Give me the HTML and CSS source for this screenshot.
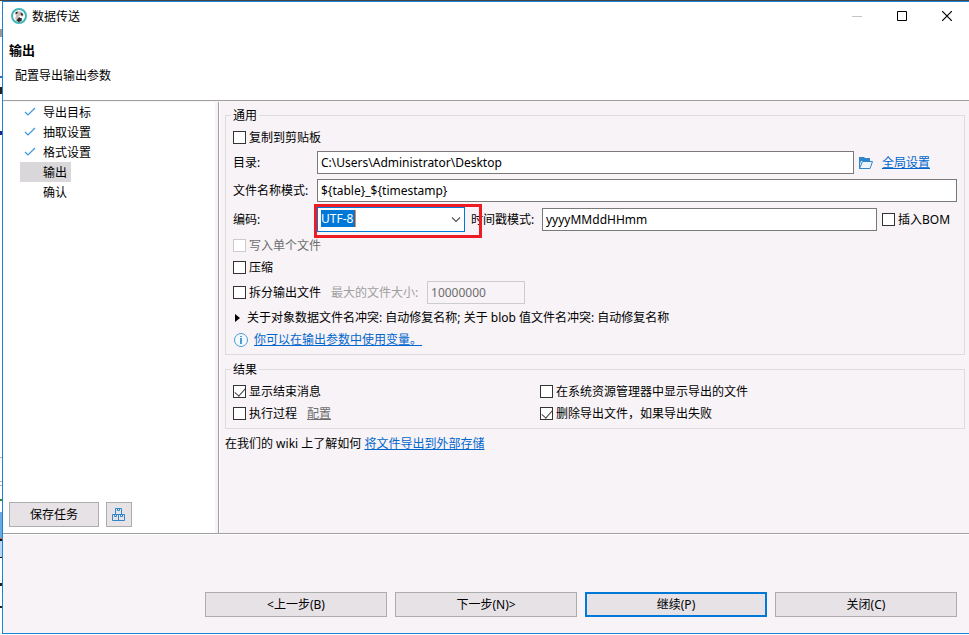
FILE: index.html
```html
<!DOCTYPE html>
<html lang="zh-CN">
<head>
  <meta charset="UTF-8">
  <meta name="viewport" content="width=device-width, initial-scale=1.0">
  <title>数据传送</title>
  <link rel="stylesheet" href="styles.css">
</head>
<body>
  <div class="fondo"></div>
  <div class="dialog">
    <!-- title bar -->
    <div class="titlebar">
      <svg class="logo" width="16" height="16" viewBox="0 0 16 16">
        <circle cx="8" cy="8" r="7" fill="#fff" stroke="#42b5b8" stroke-width="2"/>
        <path d="M4 5.500C5 3.500 7 3 9 3.500c2 0 3.500 1.500 3.500 4L11 9l-1-1.500L8 8 7 10l1.500 3.500L5.500 13C4 11 4 9.500 5 8z" fill="#c9bfb8"/>
        <path d="M4 5l2-1.500 1 1L5.500 6zM9.500 4.500L12 6l-.5 2L10 7zM7 10.500L8 9l1.500 1 1.500.5-.5 2.500-3 1-2-1.500z" fill="#2d2725"/>
      </svg>
      <span class="titulo">数据传送</span>
      <div class="win-buttons">
        <button class="win" aria-label="最小化" disabled><svg width="10" height="10"><path d="M0 5.500h10" stroke="#c4c4c4"/></svg></button>
        <button class="win" aria-label="最大化"><svg width="10" height="10"><path d="M.5 .5h9v9h-9z" fill="none" stroke="#000"/></svg></button>
        <button class="win" aria-label="关闭窗口"><svg width="10" height="10"><path d="M0 0l10 10M10 0L0 10" stroke="#000" stroke-width="1.200"/></svg></button>
      </div>
    </div>

    <!-- header -->
    <div class="header">
      <h1>输出</h1>
      <p>配置导出输出参数</p>
    </div>

    <div class="middle">
      <!-- steps -->
      <div class="sidebar">
        <ul class="steps">
          <li><svg class="tick" width="12" height="10"><path d="M1 5l3 3 7-7"/></svg>导出目标</li>
          <li><svg class="tick" width="12" height="10"><path d="M1 5l3 3 7-7"/></svg>抽取设置</li>
          <li><svg class="tick" width="12" height="10"><path d="M1 5l3 3 7-7"/></svg>格式设置</li>
          <li class="actual"><span class="tick"></span>输出</li>
          <li><span class="tick"></span>确认</li>
        </ul>
        <div class="task-buttons">
          <button class="btn save">保存任务</button>
          <button class="btn boxes" aria-label="任务">
            <svg width="14" height="14" viewBox="0 0 14 14" fill="none" stroke="#2f86cb">
              <path d="M3.500 6.500v-6h6v6M5.500 .5v2h2v-2M.5 6.500h12v6H.5zM6.500 6.500v6M2.500 6.500v2h2v-2M8.500 6.500v2h2v-2"/>
            </svg>
          </button>
        </div>
      </div>

      <!-- settings -->
      <div class="main">
        <fieldset>
          <legend>通用</legend>
          <div class="row"><label class="check"><input type="checkbox">复制到剪贴板</label></div>
          <div class="row">
            <label class="name" for="dir">目录:</label>
            <input class="text" id="dir" type="text" value="C:\Users\Administrator\Desktop">
            <svg class="folder" width="18" height="14" viewBox="0 0 18 14">
              <path d="M0 1h5l1 1h5v3H2L1 8v5H0z" fill="#2f86cb"/>
              <path d="M3.500 5.500h10l-2.500 7H.5z" fill="#eef6fc" stroke="#2f86cb"/>
            </svg>
            <span class="global"><a href="#">全局设置</a></span>
          </div>
          <div class="row">
            <label class="name" for="file">文件名称模式:</label>
            <input class="text" id="file" type="text" value="${table}_${timestamp}">
          </div>
          <div class="row">
            <label class="name" for="enc">编码:</label>
            <div class="combo">
              <select id="enc"><option>UTF-8</option></select>
              <svg class="arrow" width="10" height="6"><path d="M1 .5l4 4 4-4" fill="none" stroke="#555" stroke-width="1.200"/></svg>
              <div class="marca"></div>
            </div>
            <label class="time" for="time">时间戳模式:</label>
            <input class="text" id="time" type="text" value="yyyyMMddHHmm">
            <label class="check bom"><input type="checkbox">插入BOM</label>
          </div>
          <div class="row"><label class="check off"><input type="checkbox" disabled>写入单个文件</label></div>
          <div class="row"><label class="check"><input type="checkbox">压缩</label></div>
          <div class="row">
            <label class="check"><input type="checkbox">拆分输出文件</label>
            <label class="max" for="max">最大的文件大小:</label>
            <input class="text size" id="max" type="text" value="10000000" disabled>
          </div>
          <details>
            <summary class="row"><svg class="flecha" width="5" height="8"><path d="M0 0l5 4-5 4z"/></svg>关于对象数据文件名冲突: 自动修复名称; 关于 blob 值文件名冲突: 自动修复名称</summary>
          </details>
          <div class="row info">
            <svg width="16" height="16" viewBox="0 0 16 16">
              <circle cx="8" cy="8" r="6.500" fill="#f4f9fd" stroke="#4b9cd3"/>
              <path d="M7 4h2v1H7zM7 6h2v6H7z" fill="#4b9cd3"/>
            </svg>
            <a href="#">你可以在输出参数中使用变量。</a>
          </div>
        </fieldset>

        <fieldset>
          <legend>结果</legend>
          <div class="results">
            <div class="row"><label class="check"><input type="checkbox" checked>显示结束消息</label></div>
            <div class="row"><label class="check"><input type="checkbox">在系统资源管理器中显示导出的文件</label></div>
            <div class="row"><label class="check"><input type="checkbox">执行过程</label><a class="config" href="#">配置</a></div>
            <div class="row"><label class="check"><input type="checkbox" checked>删除导出文件，如果导出失败</label></div>
          </div>
        </fieldset>

        <p class="wiki">在我们的 wiki 上了解如何 <a href="#">将文件导出到外部存储</a></p>
      </div>
    </div>

    <!-- bottom buttons -->
    <div class="footer">
      <button class="btn">&lt;上一步(B)</button>
      <button class="btn">下一步(N)&gt;</button>
      <button class="btn default">继续(P)</button>
      <button class="btn">关闭(C)</button>
    </div>
  </div>
</body>
</html>
```
FILE: styles.css
```css
* {
  box-sizing: border-box;
}

body {
  margin: 0;
  display: flex;
  min-height: 100vh;
  padding-bottom: 1px;
  border-top: 1px solid #464646;
  background: #fff;
  color: #000;
  font: 12px/17px "Noto Sans", "Noto Sans CJK SC", sans-serif;
}

button, input, select {
  font: inherit;
  color: inherit;
  margin: 0;
}

a {
  color: #0066cc;
}

/* strip of the window behind */
.fondo {
  width: 2px;
  background: linear-gradient(#fff 28px, #999 28px, #999 36px, #fff 36px, #fff 75px, #2f6fc8 75px, #2f6fc8 77px, #fff 77px, #fff 86px, #222 86px, #222 93px, #fff 93px, #fff 130px, #1a2a8c 130px, #1a2a8c 134px, #fff 134px, #fff 456px, #b0b0b0 456px, #b0b0b0 457px, #fff 457px, #fff 480px, #b0b0b0 480px, #b0b0b0 481px, #fff 481px, #fff 484px, #b0b0b0 484px, #b0b0b0 485px, #fff 485px, #fff 498px, #2c8a2c 498px, #2c8a2c 500px, #fff 500px, #fff 511px, #6ba9e6 511px, #6ba9e6 537px, #e8603c 537px, #e8603c 538px, #111 538px, #111 540px, #b8d6f5 540px, #b8d6f5 556px, #111 556px, #111 557px, #fff 557px, #fff 582px, #222 582px, #222 585px, #fff 585px, #fff 605px, #222 605px, #222 607px, #fff 607px);
}

.dialog {
  flex: 1;
  display: flex;
  flex-direction: column;
  border: 1px solid #1a82d2;
  border-right: none;
  background: #f7f3f7;
}

.titlebar {
  display: flex;
  align-items: center;
  height: 28px;
  padding-left: 8px;
  background: #fff;
}

.titulo {
  flex: 1;
  padding-left: 5px;
}

.win-buttons {
  display: flex;
}

.win {
  display: flex;
  align-items: center;
  justify-content: center;
  width: 45px;
  height: 28px;
  padding: 0;
  border: none;
  background: none;
}

/* Header */
.header {
  padding: 12px 6px 16px;
  border-bottom: 1px solid #a0a0a0;
  background: #fff;
}

.header h1 {
  margin: 0;
  font-size: 13px;
  line-height: 17px;
}

.header p {
  margin: 8px 6px 0;
}

.middle {
  flex: 1;
  display: flex;
  padding-top: 1px;
}

/* Sidebar */
.sidebar {
  display: flex;
  flex-direction: column;
  justify-content: space-between;
  width: 212px;
  background: #fff;
}

.steps {
  margin: 0;
  padding: 0 0 0 17px;
  list-style: none;
}

.steps li {
  display: flex;
  align-items: center;
  width: max-content;
  height: 20px;
  padding: 0 4px;
}

.tick {
  width: 12px;
  margin-right: 7px;
  fill: none;
  stroke: #3c96dc;
  stroke-width: 1.2;
}

.actual {
  background: #dad7da;
}

.task-buttons {
  display: flex;
  gap: 7px;
  padding: 0 6px 6px;
}

.btn {
  height: 25px;
  padding: 0;
  border: 1px solid #adadad;
  background: #e6e2e6;
  text-align: center;
}

.save {
  width: 90px;
}

.boxes {
  display: flex;
  align-items: center;
  justify-content: center;
  width: 26px;
}

/* Main panel */
.main {
  flex: 1;
  display: flex;
  flex-direction: column;
  gap: 6px;
  margin-left: 3px;
  padding: 5px 4px 0 6px;
  border-left: 1px solid #a0a0a0;
  box-shadow: inset 1px 0 #fff;
}

fieldset {
  min-width: 0;
  margin: 0;
  padding: 6px 7px;
  border: 1px solid #dcdcdc;
}

legend {
  height: 16px;
  margin-left: -2px;
  padding: 0 2px;
  line-height: 17px;
}

.row {
  display: flex;
  align-items: center;
  gap: 5px;
  min-height: 17px;
  margin-bottom: 5px;
  white-space: nowrap;
}

.name {
  width: 79px;
}

.text {
  flex: 1;
  min-width: 0;
  height: 23px;
  padding: 0 3px;
  border: 1px solid #7a7a7a;
  background: #fff;
}

.global {
  width: 75px;
}

.check {
  display: flex;
  align-items: center;
  gap: 3px;
}

.check input {
  display: flex;
  justify-content: center;
  align-items: flex-start;
  width: 13px;
  height: 13px;
  border: 1px solid #333;
  background: #fff;
  appearance: none;
}

.check input:checked::before {
  content: "";
  width: 5px;
  height: 9px;
  border: solid #444;
  border-width: 0 1px 1px 0;
  transform: rotate(42deg);
}

.off {
  color: #6d6d6d;
}

.check input:disabled {
  border-color: #ccc;
}

.bom {
  width: 75px;
}

.time {
  width: 66px;
  margin-left: 1px;
}

.combo {
  position: relative;
  width: 148px;
  height: 25px;
}

.combo select {
  width: 100%;
  height: 25px;
  padding: 0 3px 2px;
  border: 1px solid #0078d7;
  background: linear-gradient(90deg, #0078d7 34px, #ff8728 34px) 3px 2px / 35px 17px no-repeat #fff;
  color: #fff;
  appearance: none;
}

.arrow {
  position: absolute;
  top: 10px;
  right: 4px;
  pointer-events: none;
}

.marca {
  position: absolute;
  top: -3px;
  left: -3px;
  width: 168px;
  height: 34px;
  border: 3px solid #ed1c24;
  pointer-events: none;
}

.max {
  width: 91px;
  margin-left: 5px;
  color: #a0a0a0;
}

.size {
  flex: none;
  width: 98px;
  border-color: #ccc;
  background: #f7f3f7;
  color: #6d6d6d;
}

summary {
  list-style: none;
}

.flecha {
  margin: 0 2px;
}

.info {
  height: 17px;
  margin-bottom: 0;
}

.results {
  display: grid;
  grid-template-columns: 307px 1fr;
  row-gap: 5px;
}

.results .row {
  margin-bottom: 0;
}

.config {
  margin-left: 5px;
  color: #6d6d6d;
}

.wiki {
  margin: 0;
}

/* Footer */
.footer {
  display: flex;
  justify-content: flex-end;
  gap: 8px;
  padding: 58px 12px 16px;
  border-top: 1px solid #a0a0a0;
  box-shadow: inset 0 1px #fff;
}

.footer .btn {
  width: 182px;
}

.footer .default {
  border: 2px solid #0078d7;
}
```
